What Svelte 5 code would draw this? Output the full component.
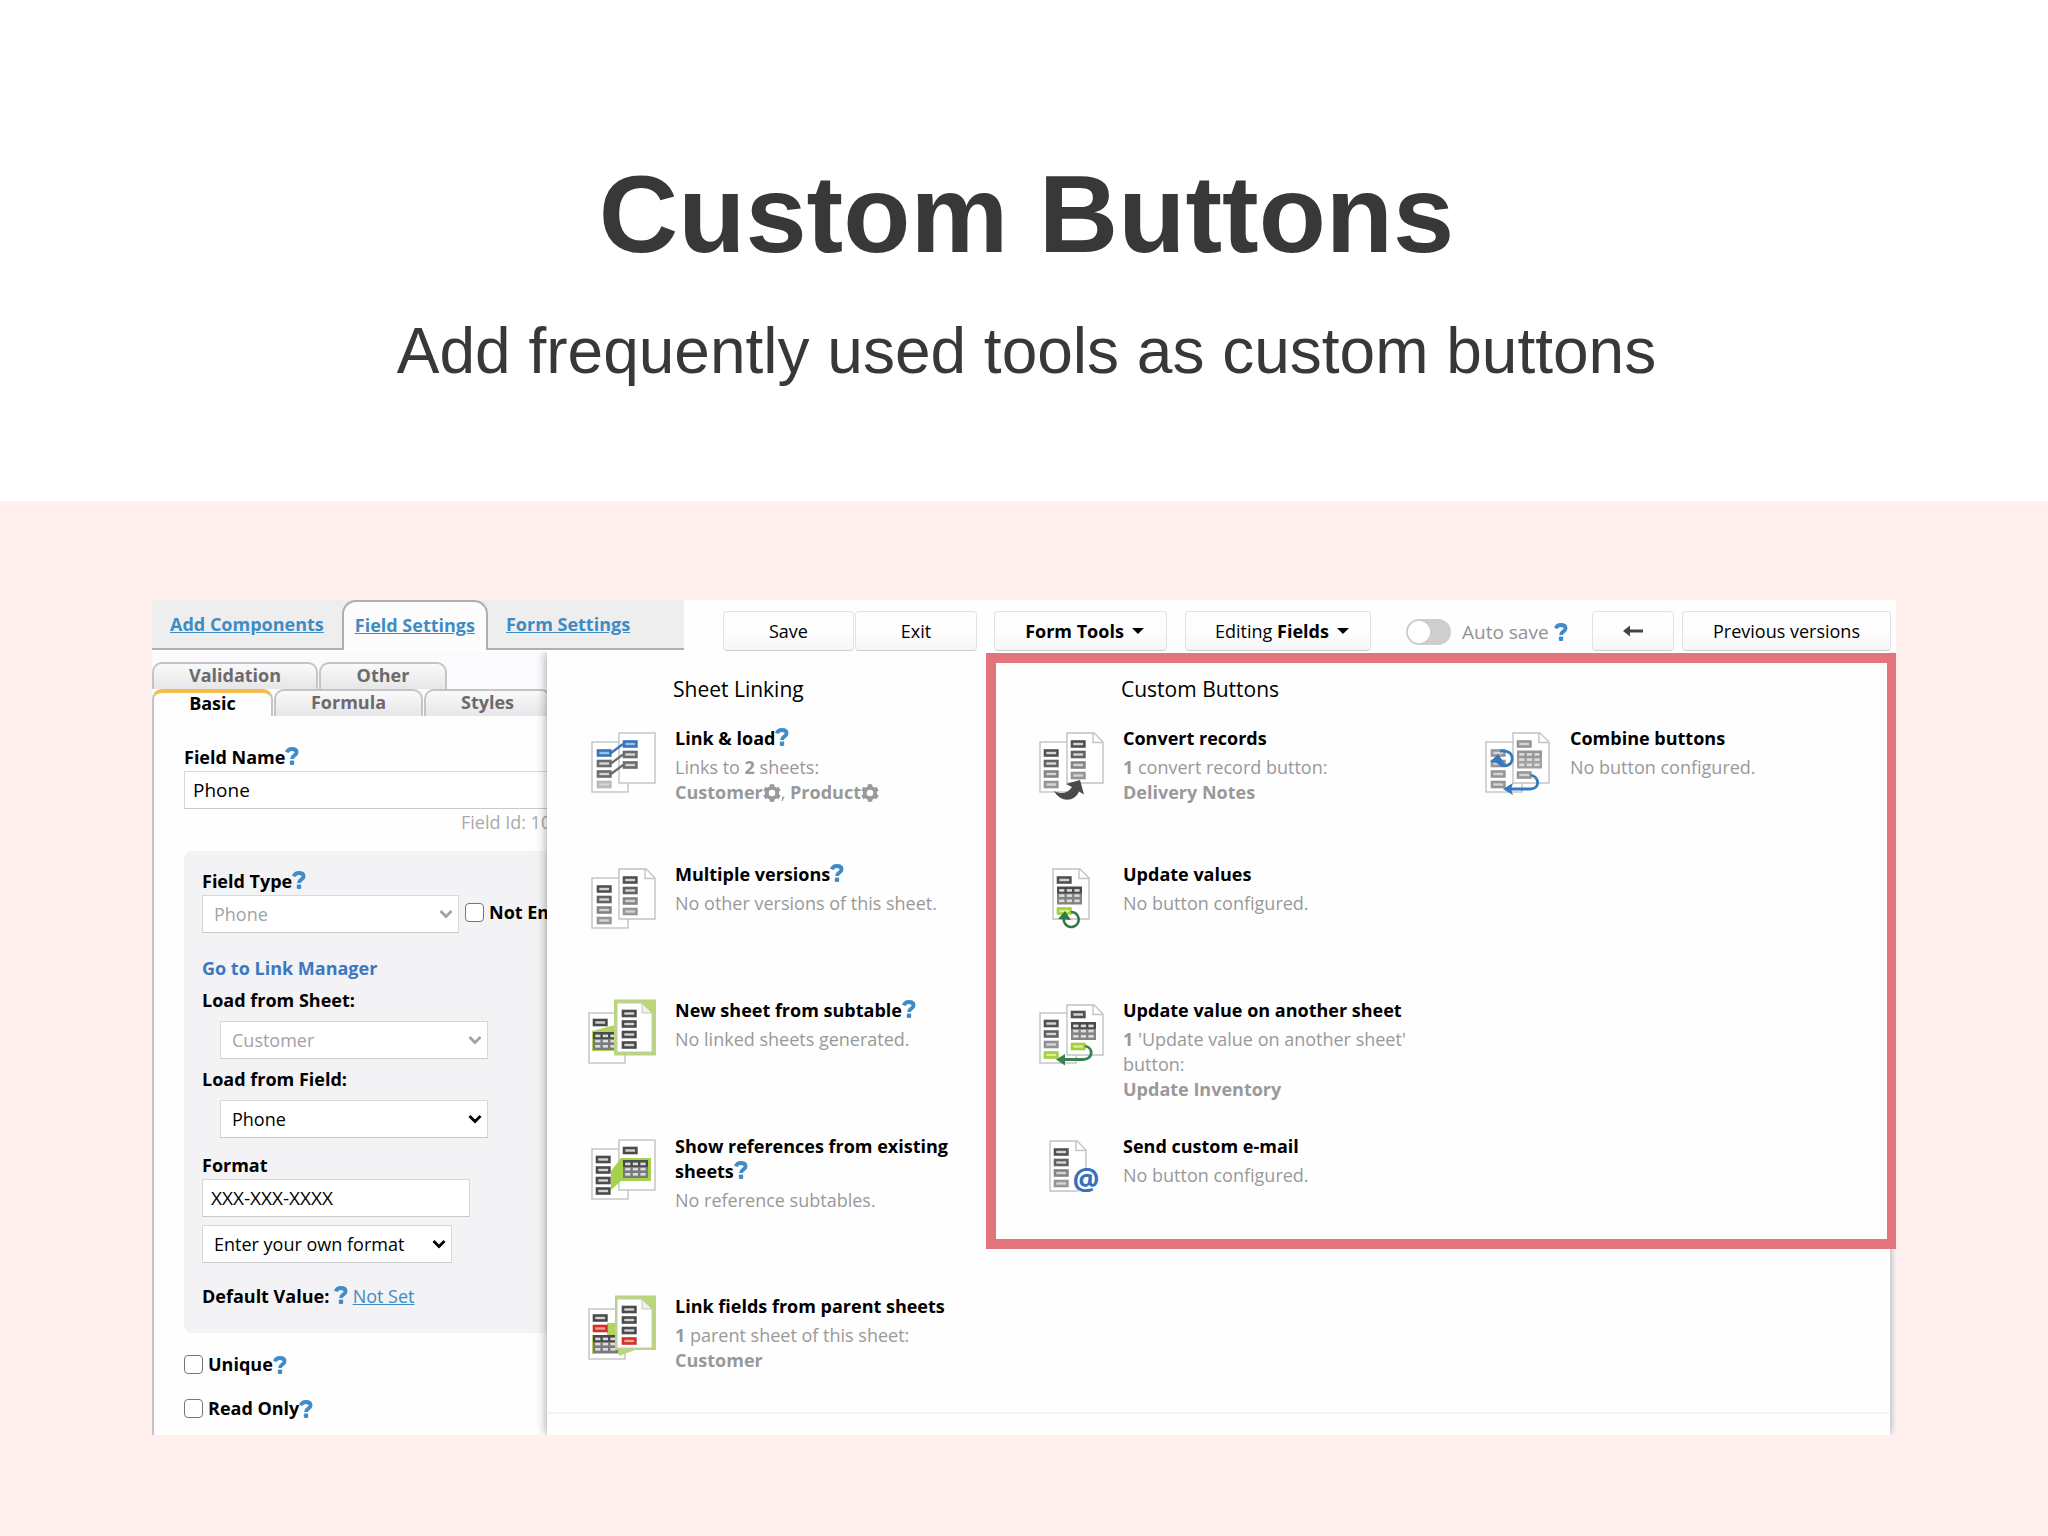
<script>
  const mainTabs = ['Add Components', 'Field Settings', 'Form Settings'];

  const linkingItems = [
    { icon: 'link', title: 'Link & load', help: true, count: '2', before: 'Links to', after: 'sheets:', links: ['Customer', 'Product'], gears: true },
    { icon: 'versions', title: 'Multiple versions', help: true, text: 'No other versions of this sheet.' },
    { icon: 'subtable', title: 'New sheet from subtable', help: true, text: 'No linked sheets generated.' },
    { icon: 'references', title: 'Show references from existing sheets', help: true, text: 'No reference subtables.', tall: true },
    { icon: 'parent', title: 'Link fields from parent sheets', count: '1', after: 'parent sheet of this sheet:', links: ['Customer'] }
  ];

  const customItems = [
    { icon: 'convert', title: 'Convert records', count: '1', after: 'convert record button:', links: ['Delivery Notes'] },
    { icon: 'combine', title: 'Combine buttons', text: 'No button configured.' },
    { icon: 'update', title: 'Update values', text: 'No button configured.' },
    { icon: 'another', title: 'Update value on another sheet', count: '1', after: "'Update value on another sheet' button:", links: ['Update Inventory'] },
    { icon: 'email', title: 'Send custom e-mail', text: 'No button configured.' }
  ];

  const dark = ['#4a4a4c', '#4a4a4c', '#4a4a4c', '#4a4a4c'];
  const fade = ['#505052', '#626264', '#848486', '#959597'];
  const grey = ['#959595', '#959595', '#959595', '#959595'];

  let fieldName = $state('Phone');
  let format = $state('XXX-XXX-XXXX');
  let autoSave = $state(false);
</script>

{#snippet help()}
  <svg class="help" viewBox="0 0 14 18" role="img" aria-label="Help">
    <path d="M1.8 5.4C2.6 3 4.300 2 6.800 2C9.500 2 11.600 3.200 11.600 5.500C11.600 8.500 7 8.300 7 12" fill="none" stroke="currentColor" stroke-width="3.8" />
    <rect x="4.800" y="13.500" width="4.400" height="4.400" rx="1.200" fill="currentColor" />
  </svg>
{/snippet}

{#snippet gear()}
  <svg class="gear" viewBox="0 0 16 16" aria-hidden="true">
    <circle cx="8" cy="8" r="4.6" fill="none" stroke="currentColor" stroke-width="3.4" />
    <g stroke="currentColor" stroke-width="4">
      {#each [0, 60, 120, 180, 240, 300] as turn}
        <path d="M8 0.2V3.4" transform="rotate({turn} 8 8)" />
      {/each}
    </g>
  </svg>
{/snippet}

{#snippet chevron()}
  <svg class="chevron" viewBox="0 0 14 10" aria-hidden="true">
    <path d="M1.5 2L7 7.6L12.5 2" fill="none" stroke="currentColor" stroke-width="2.8" />
  </svg>
{/snippet}

{#snippet page(x, y, folded)}
  {#if folded}
    <path d="M{x} {y}h27l9 9v41h-36z" fill="#fff" stroke="#c2c2c2" stroke-width="1.4" />
    <path d="M{x + 26} {y}v9.5h10" fill="none" stroke="#c2c2c2" stroke-width="1.4" />
  {:else}
    <rect {x} {y} width="36" height="50" fill="#fff" stroke="#c2c2c2" stroke-width="1.4" />
  {/if}
{/snippet}

{#snippet chip(x, y, color, fill = '#d4d4d4')}
  <rect x={x + 1} y={y + 1} width="12.4" height="5" {fill} stroke={color} stroke-width="2.6" />
{/snippet}

{#snippet chips(x, y, colors)}
  {#each colors as color, i}
    {@render chip(x, y + i * 10.5, color)}
  {/each}
{/snippet}

{#snippet table(x, y, head, body)}
  <rect {x} {y} width="25" height="8" fill={head} />
  <rect {x} y={y + 7} width="25" height="11" fill={body} />
  {#each [0, 1, 2] as row}
    {#each [0, 1, 2] as col}
      <rect x={x + 2.2 + col * 7.6} y={y + 2.6 + row * 5.2} width="5.2" height="2.6" fill="#dcdcdc" />
    {/each}
  {/each}
{/snippet}

{#snippet icon(name)}
  <svg class="icon" viewBox="0 0 76 76" aria-hidden="true">
    {#if name === 'link'}
      {@render page(7, 16, false)}
      {@render page(34, 7, false)}
      {@render chip(12, 23.5, '#3c72b8', '#8fc4ef')}
      {@render chips(12, 34, ['#6b6b6b', '#6b6b6b', '#b9b9b9'])}
      {@render chip(38, 14.5, '#3c72b8', '#8fc4ef')}
      {@render chips(38, 25, ['#6b6b6b', '#6b6b6b'])}
      <path d="M26 27L38 18" stroke="#3c72b8" stroke-width="2.2" />
      <path d="M26 37.5L38 28.5M26 48L38 39" stroke="#6b6b6b" stroke-width="2.2" />
    {:else if name === 'versions'}
      {@render page(7, 16, false)}
      {@render page(34, 7, true)}
      {@render chips(12, 23.5, fade)}
      {@render chips(38, 14.5, fade)}
    {:else if name === 'subtable'}
      {@render page(4, 15, false)}
      <path d="M7 33L30 27H36V53H7z" fill="#b0d45c" />
      {@render chip(8, 21, '#4a4a4c')}
      {@render table(8, 34, '#4a4a4c', '#7a7a7c')}
      <rect x="29" y="1.5" width="42" height="56" fill="#b9d67a" />
      <path d="M32 5H57L67 15V54H32z" fill="#fff" stroke="#c4c8ba" stroke-width="1" />
      <path d="M57 5V15H67z" fill="#f0f0f0" stroke="#c4c8ba" stroke-width="1" />
      {@render chips(37, 12, dark)}
    {:else if name === 'references'}
      {@render page(7, 15, false)}
      {@render page(34, 6, false)}
      <path d="M26 37L36 24H66V47H36L26 56z" fill="#a4d24a" />
      {@render chips(11, 22, dark)}
      {@render chip(38, 13, '#4a4a4c')}
      {@render table(38, 26, '#4a4a4c', '#7a7a7c')}
    {:else if name === 'parent'}
      {@render page(4, 15, false)}
      <path d="M22 29H36V60H7V41H22z" fill="#b0d45c" />
      {@render chip(8, 20.5, '#4a4a4c')}
      {@render chip(8, 31, '#cf3126', '#f2a097')}
      {@render table(8, 41, '#4a4a4c', '#7a7a7c')}
      <path d="M30 1.5H71V56H50L34 62V56H30z" fill="#b9d67a" />
      <path d="M32 5H57L67 15V54H32z" fill="#fff" stroke="#c4c8ba" stroke-width="1" />
      <path d="M57 5V15H67z" fill="#f0f0f0" stroke="#c4c8ba" stroke-width="1" />
      {@render chips(37, 12, dark.slice(0, 3))}
      {@render chip(37, 43.5, '#cf3126', '#f2a097')}
    {:else if name === 'convert'}
      {@render page(7, 16, false)}
      {@render page(34, 7, true)}
      {@render chips(11, 23.5, fade)}
      {@render chips(38, 14.5, fade)}
      <path d="M21 65C27 76 41 77 46 65.500L51 68.500L47 54L33 58L39 61C35 67 29 69 21 65z" fill="#4a4a4a" />
    {:else if name === 'combine'}
      {@render page(6, 16, false)}
      {@render page(33, 7, true)}
      {@render chips(11, 23.5, grey)}
      {@render chip(37, 14.5, '#959595')}
      {@render table(37, 24.5, '#959595', '#a0a0a0')}
      {@render chip(37, 45.5, '#959595')}
      <path d="M20 25C30 24 33 29 32 34C31 40 23 42 18 36" fill="none" stroke="#3578bd" stroke-width="2.8" />
      <path d="M10 36L18 28L25 38z" fill="#3578bd" />
      <path d="M51 49C60 52 60 63 50 63H29" fill="none" stroke="#3578bd" stroke-width="2.800" />
      <path d="M23 63L33 57L31 63L33 69z" fill="#3578bd" />
    {:else if name === 'update'}
      {@render page(20, 7, true)}
      {@render chip(24, 14.5, '#505052')}
      {@render table(24, 24.5, '#4a4a4c', '#848486')}
      {@render chip(24, 45.5, '#a3cf3c', '#d8f08e')}
      <path d="M38 50A7.500 7.500 0 1 1 31 59.500A7.500 7.500 0 0 1 31.500 54" fill="none" stroke="#2f7a46" stroke-width="2.600" />
      <path d="M25 57L32 49L38 58z" fill="#2f7a46" />
    {:else if name === 'another'}
      {@render page(7, 15, false)}
      {@render page(34, 7, true)}
      {@render chips(11, 22, ['#505052', '#626264', '#909092'])}
      {@render chip(11, 53.5, '#a3cf3c', '#d8f08e')}
      {@render chip(38, 13, '#505052')}
      {@render table(38, 24, '#4a4a4c', '#848486')}
      {@render chip(38, 45, '#a3cf3c', '#d8f08e')}
      <path d="M52 48C61 50 60 61.500 50 61.500H31" fill="none" stroke="#3d8050" stroke-width="2.800" />
      <path d="M23 61.500L32 56V67.500z" fill="#3d8050" />
    {:else}
      {@render page(17, 7, true)}
      {@render chips(21, 14.5, fade)}
      <circle cx="53" cy="48" r="12" fill="#fff" />
      <text x="53" y="56" text-anchor="middle" class="at">@</text>
    {/if}
  </svg>
{/snippet}

{#snippet tool(item)}
  <li class="tool" class:tall={item.tall}>
    {@render icon(item.icon)}
    <div class="tool-text">
      <h3>{item.title}{#if item.help}{@render help()}{/if}</h3>
      <p>
        {#if item.text}
          {item.text}
        {:else}
          {item.before} <b>{item.count}</b> {item.after}<br />
          {#each item.links as link, i}{i > 0 ? ', ' : ''}<b>{link}</b>{#if item.gears}{@render gear()}{/if}{/each}
        {/if}
      </p>
    </div>
  </li>
{/snippet}

<header class="hero">
  <h1>Custom Buttons</h1>
  <p>Add frequently used tools as custom buttons</p>
</header>

<main class="stage">
  <div class="builder">
    <div class="topbar">
      <nav class="main-tabs" aria-label="Settings">
        {#each mainTabs as tab, i}
          <a href="#tab-{i}" class:active={i === 1}>{tab}</a>
        {/each}
      </nav>
      <div class="toolbar">
        <div class="group">
          <button class="w-save">Save</button>
          <button class="w-exit">Exit</button>
        </div>
        <button class="w-tools"><b>Form Tools</b><span class="caret"></span></button>
        <button class="w-editing"><span>Editing <b>Fields</b></span><span class="caret"></span></button>
        <label class="auto">
          <input type="checkbox" role="switch" bind:checked={autoSave} />
          <span>Auto save</span>
          {@render help()}
        </label>
        <div class="group versions">
          <button class="w-back" aria-label="Undo">
            <svg viewBox="0 0 20 12" width="20" height="12"><path d="M0 6L7 0.5V4.5H20V7.5H7V11.5z" fill="#444" /></svg>
          </button>
          <button class="w-prev">Previous versions</button>
        </div>
      </div>
    </div>

    <div class="workspace">
      <aside class="sidebar">
        <div class="sub-tabs">
          <button class="w-validation">Validation</button>
          <button class="w-other">Other</button>
        </div>
        <div class="sub-tabs">
          <button class="w-basic active">Basic</button>
          <button class="w-formula">Formula</button>
          <button class="w-styles">Styles</button>
        </div>

        <form class="fields">
          <label class="label" for="field-name">Field Name{@render help()}</label>
          <input id="field-name" class="text" type="text" bind:value={fieldName} />
          <p class="field-id">Field Id: 10</p>

          <div class="type-box">
            <label class="label" for="field-type">Field Type{@render help()}</label>
            <div class="type-row">
              <span class="select off type">
                <select id="field-type" disabled><option>Phone</option></select>
                {@render chevron()}
              </span>
              <label class="check"><input type="checkbox" />Not Empty</label>
            </div>
            <a class="manager" href="#manager">Go to Link Manager</a>
            <label class="label sheet" for="load-sheet">Load from Sheet:</label>
            <span class="select off load">
              <select id="load-sheet" disabled><option>Customer</option></select>
              {@render chevron()}
            </span>
            <label class="label from" for="load-field">Load from Field:</label>
            <span class="select load">
              <select id="load-field"><option>Phone</option></select>
              {@render chevron()}
            </span>
            <label class="label format" for="format">Format</label>
            <input id="format" class="text short" type="text" bind:value={format} />
            <span class="select own">
              <select aria-label="Format preset"><option>Enter your own format</option></select>
              {@render chevron()}
            </span>
            <p class="label default">Default Value: {@render help()} <a href="#default">Not Set</a></p>
          </div>

          <label class="check solo"><input type="checkbox" />Unique{@render help()}</label>
          <label class="check solo"><input type="checkbox" />Read Only{@render help()}</label>
        </form>
      </aside>

      <div class="menu">
        <div class="menu-columns">
          <section class="linking">
            <h2>Sheet Linking</h2>
            <ul>
              {#each linkingItems as item}{@render tool(item)}{/each}
            </ul>
          </section>
          <section class="custom">
            <h2>Custom Buttons</h2>
            <ul>
              {#each customItems as item}{@render tool(item)}{/each}
            </ul>
          </section>
        </div>
      </div>
    </div>
  </div>
</main>

<style>
  :global(body) {
    background: #ffefed;
  }

  h1, h2, h3, p, ul { margin: 0; padding: 0; }
  ul { list-style: none; }

  .hero {
    box-sizing: border-box;
    height: 501px;
    padding: 150px 0 0 5px;
    background: #fff;
    color: #383838;
    font-family: Arial, "Liberation Sans", sans-serif;
    text-align: center;
  }
  .hero h1 {
    font-size: 110px;
    line-height: 128px;
    font-weight: 700;
  }
  .hero p {
    margin-top: 36px;
    font-size: 64px;
    line-height: 74px;
  }

  .stage {
    padding: 99px 152px 100px;
    font-family: "Open Sans", "Noto Sans", sans-serif;
    font-size: 18px;
    line-height: 25px;
    color: #000;
  }
  .builder {
    background: #fefefe;
  }

  /* top bar */
  .topbar {
    display: flex;
    height: 52px;
  }
  .main-tabs {
    display: flex;
    box-sizing: border-box;
    flex: 0 0 532px;
    height: 50px;
    background: #efeeee;
    border-bottom: 2px solid #b0aeb0;
  }
  .main-tabs a {
    box-sizing: border-box;
    height: 50px;
    padding: 12px 18px 0;
    color: #3f8cc5;
    font-weight: 700;
  }
  .main-tabs a.active {
    padding: 11px 11px 0;
    border: 2px solid #b0aeb0;
    border-bottom: 0;
    border-radius: 14px 14px 0 0;
    background: #fcfcfd;
  }

  .toolbar {
    display: flex;
    flex: 1;
    align-items: flex-start;
    padding: 11px 5px 0 39px;
  }
  .group { display: flex; gap: 1px; }
  button {
    font: inherit;
    color: inherit;
    cursor: pointer;
  }
  .toolbar button {
    display: flex;
    align-items: center;
    justify-content: center;
    gap: 8px;
    box-sizing: border-box;
    height: 40px;
    padding: 0;
    border: 1px solid #e3e2e5;
    border-bottom-color: #cfced2;
    border-radius: 4px;
    background: linear-gradient(#fefefe 50%, #f6f5f8);
  }
  .toolbar .w-save { width: 131px; }
  .toolbar .w-exit { width: 122px; }
  .toolbar .w-tools { width: 173px; margin-left: 17px; padding-left: 8px; }
  .toolbar .w-editing { width: 186px; margin-left: 18px; padding-left: 8px; }
  .toolbar .w-back { width: 82px; }
  .toolbar .w-prev { width: 209px; }
  .versions { gap: 8px; margin-left: auto; }
  .caret {
    border: 6px solid transparent;
    border-top-color: #000;
    border-bottom: 0;
  }
  .auto {
    display: flex;
    align-items: center;
    height: 42px;
    margin-left: 35px;
    color: #929292;
    font-size: 19px;
  }
  .auto span { margin: 0 5px 0 11px; }
  .auto input {
    appearance: none;
    width: 45px;
    height: 26px;
    margin: 0;
    padding: 2px;
    border-radius: 13px;
    background: #cfcdd0;
  }
  .auto input::before {
    content: "";
    display: block;
    width: 22px;
    height: 22px;
    border-radius: 50%;
    background: #fff;
  }
  .auto input:checked::before { margin-left: auto; }

  .help {
    width: 14px;
    height: 18px;
    color: #3f8cca;
    vertical-align: -1px;
  }
  .gear {
    width: 18px;
    height: 18px;
    vertical-align: -3px;
  }

  /* sidebar */
  .workspace { display: flex; }
  .sidebar {
    box-sizing: border-box;
    flex: 0 0 395px;
    overflow: hidden;
    padding-top: 10px;
    background: #fbfafc;
  }
  .sub-tabs {
    display: flex;
    gap: 1px;
    width: 532px;
  }
  .sub-tabs button {
    box-sizing: border-box;
    height: 27px;
    padding: 0 0 4px;
    border: 2px solid #c4c3c6;
    border-bottom: 0;
    border-radius: 10px 10px 0 0;
    background: linear-gradient(#fafafa, #e6e5e8);
    color: #6b6a6c;
    font-weight: 700;
    line-height: 20px;
  }
  .sub-tabs button.active {
    padding-bottom: 6px;
    border-top: 4px solid #f6bd4b;
    background: #fefefe;
    color: #000;
  }
  .w-validation { width: 166px; }
  .w-other { width: 128px; }
  .w-basic { width: 121px; }
  .w-formula { width: 149px; }
  .w-styles { width: 127px; }

  .fields {
    display: flex;
    flex-direction: column;
    align-items: flex-start;
    width: 532px;
    box-sizing: border-box;
    padding: 29px 20px 14px 30px;
    border-left: 2px solid #c4c3c6;
    background: #fefefe;
  }
  .label, .check { font-weight: 700; }
  .text, .select {
    box-sizing: border-box;
    height: 38px;
    border: 1px solid #d8d7da;
    border-bottom-color: #c9c8cb;
    background: #fff;
  }
  .text {
    width: 100%;
    margin: 1px 0 0;
    padding: 0 8px;
    font: inherit;
    font-size: 19px;
  }
  .text.short {
    width: 268px;
    margin: 1px 0 8px;
  }
  .field-id {
    padding: 1px 0 0 277px;
    color: #aaa;
  }
  .type-box {
    display: flex;
    flex-direction: column;
    align-items: flex-start;
    align-self: stretch;
    margin: 16px 0 0;
    padding: 18px 18px 24px;
    border-radius: 8px;
    background: #f3f2f4;
  }
  .type-row {
    display: flex;
    align-items: center;
    gap: 6px;
    margin: 1px 0 23px;
  }
  .type-row .check { padding-bottom: 4px; }
  .select {
    display: flex;
    align-items: center;
    position: relative;
  }
  .select select {
    appearance: none;
    width: 100%;
    height: 100%;
    padding: 0 30px 0 11px;
    border: 0;
    background: none;
    color: #000;
    font: inherit;
    opacity: 1;
  }
  .select.off select, .select.off .chevron { color: #a3a2a5; }
  .chevron {
    position: absolute;
    right: 5px;
    width: 14px;
    height: 10px;
    pointer-events: none;
  }
  .type { width: 257px; }
  .load { width: 268px; margin: 8px 0 0 18px; }
  .own { width: 250px; }
  .sheet { margin-top: 7px; }
  .from { margin-top: 8px; }
  .format { margin-top: 15px; }
  .default { margin-top: 21px; }
  .default a {
    color: #3f8cc5;
    font-weight: 400;
  }
  .manager {
    color: #3b78c2;
    font-weight: 700;
    text-decoration: none;
  }
  .check {
    display: flex;
    align-items: center;
    white-space: nowrap;
  }
  .check input {
    appearance: none;
    box-sizing: border-box;
    width: 19px;
    height: 19px;
    margin: 0 5px 0 0;
    border: 1px solid #767676;
    border-radius: 4px;
    background: #fff;
  }
  .solo { margin-top: 19px; }

  /* drop-down menu */
  .menu {
    flex: 1;
    min-width: 0;
    z-index: 1;
    margin-right: 6px;
    background: #fefefe;
    box-shadow: 0 0 10px rgba(0, 0, 0, 0.4);
    clip-path: inset(0 -6px 0 -16px);
  }
  .menu-columns {
    display: flex;
    align-items: flex-start;
    height: 760px;
    border-bottom: 2px solid #f5f4f7;
  }
  .linking {
    flex: 0 0 439px;
    box-sizing: border-box;
    padding: 23px 15px 0 38px;
  }
  .custom {
    flex: 1;
    box-sizing: border-box;
    height: 596px;
    margin: 1px -7px 0 0;
    padding: 12px 0 0 37px;
    border: 10px solid #e2757c;
    background: #fefefe;
  }
  .custom ul {
    display: grid;
    grid-template-columns: 447px 1fr;
  }
  .custom li:nth-child(n + 3) { grid-column: 1; }
  h2 {
    margin: 0 0 22px 88px;
    font-size: 21px;
    line-height: 29px;
    font-weight: 400;
  }
  .tool {
    display: flex;
    gap: 14px;
    height: 136px;
  }
  .tool.tall { height: 160px; }
  .icon {
    flex: none;
    width: 76px;
    height: 76px;
  }
  .at {
    fill: #3470bd;
    font-size: 30px;
    font-weight: 700;
  }
  .tool-text { max-width: 296px; }
  h3 {
    font-size: 18px;
    line-height: 25px;
    font-weight: 700;
  }
  .tool p {
    margin-top: 4px;
    color: #999;
  }
</style>
